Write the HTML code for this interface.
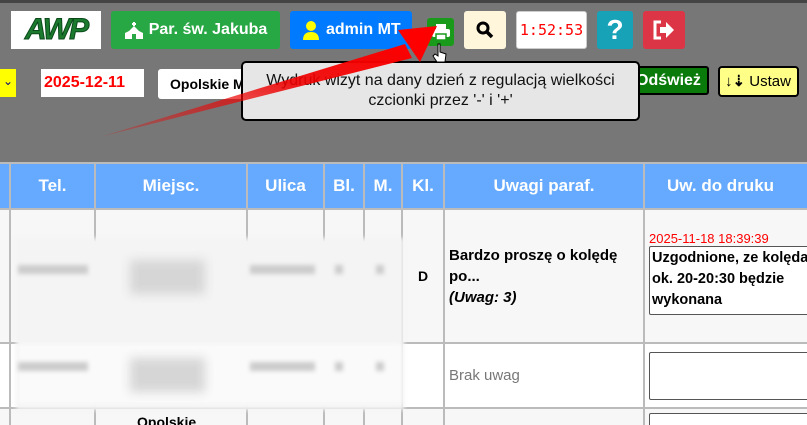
<!DOCTYPE html>
<html><head><meta charset="utf-8"><style>
*{box-sizing:border-box;margin:0;padding:0}
html,body{width:807px;height:425px;overflow:hidden}
body{background:#777;font-family:"Liberation Sans",Arial,sans-serif;position:relative}
.a{position:absolute}
.btn{position:absolute;border-radius:3px;color:#fff;font-weight:bold;font-size:16px;display:flex;align-items:center;justify-content:center;white-space:nowrap}
.tw{position:absolute;left:0;top:0;width:807px;height:425px;overflow:hidden}
table{position:absolute;left:-20px;top:162px;border-collapse:collapse;table-layout:fixed;width:863px}
td,th{border:2px solid #bbb;overflow:hidden}
th{background:#66aaff;color:#fff;font-size:17px;height:46px;font-weight:bold}
</style></head><body>
<div class="a" style="left:0;top:0;width:807px;height:3px;background:#444"></div>
<div class="a" style="left:11px;top:11px;width:90px;height:38px;background:#fff;color:#1b7a2e;font:italic bold 30px 'Liberation Sans';text-align:center;line-height:38px;letter-spacing:-2px;-webkit-text-stroke:1px #0a4a1a">AWP</div>
<div class="btn" style="left:111px;top:11px;width:169px;height:38px;background:#28a745"><svg width="20" height="18" style="margin-right:5px"><path d="M10 1 L10 5 M8 3 L12 3" stroke="#fff" stroke-width="2"/><path d="M10 5 L15 10 L15 18 L12 18 L12 13 L8 13 L8 18 L5 18 L5 10Z M1 12 L5 10 L5 18 L1 18Z M19 12 L15 10 L15 18 L19 18Z" fill="#fff"/></svg>Par. św. Jakuba</div>
<div class="btn" style="left:290px;top:11px;width:122px;height:38px;background:#007bff;justify-content:flex-start;padding-left:12px"><svg width="18" height="20" style="margin-right:6px"><circle cx="9" cy="6" r="5" fill="#ff0"/><path d="M1 20 Q1 12 9 12 Q17 12 17 20Z" fill="#ff0"/></svg>admin MT</div>
<div class="btn" style="left:427px;top:18px;width:27px;height:28px;background:#1a9a1a"><svg width="20" height="18"><rect x="5" y="1" width="10" height="5" fill="#fff"/><rect x="1" y="6" width="18" height="8" rx="2" fill="#fff"/><rect x="5" y="11" width="10" height="6" fill="#fff" stroke="#1a9a1a" stroke-width="1.5"/></svg></div>
<div class="btn" style="left:464px;top:11px;width:42px;height:38px;background:#fff6dc"><svg width="18" height="18"><circle cx="7" cy="7" r="5" stroke="#000" stroke-width="3" fill="none"/><path d="M11 11 L16 16" stroke="#000" stroke-width="3.5"/></svg></div>
<div class="btn" style="left:516px;top:11px;width:71px;height:38px;background:#fff;color:#f00;font:15px 'DejaVu Sans Mono',monospace;border:1px solid #ccc">1:52:53</div>
<div class="btn" style="left:597px;top:11px;width:36px;height:38px;background:#17a2b8;font-size:28px">?</div>
<div class="btn" style="left:643px;top:11px;width:42px;height:38px;background:#dc3545"><svg width="24" height="20"><path d="M9 2 H3 V18 H9" stroke="#fff" stroke-width="3" fill="none"/><path d="M8 7 H14 V2 L22 10 L14 18 V13 H8Z" fill="#fff"/></svg></div>
<div class="a" style="left:0;top:69px;width:16px;height:28px;background:#ff0;color:#000080;font-size:12px;text-align:center;line-height:24px">⌄</div>
<div class="a" style="left:41px;top:69px;width:103px;height:28px;background:#fff;color:#f00;font-weight:bold;font-size:16px;line-height:28px;padding-left:3px">2025-12-11</div>
<div class="a" style="left:158px;top:69px;width:200px;height:30px;background:#fff;border-radius:3px;font-weight:bold;font-size:14px;line-height:30px;padding-left:12px">Opolskie Miasteczko</div>
<div class="a" style="left:630px;top:66px;width:79px;height:29px;background:#0a7a0a;border:2px solid #000;border-radius:3px;color:#fff;font-weight:bold;font-size:16px;line-height:25px;padding-left:4px;white-space:nowrap">Odśwież</div>
<div class="a" style="left:718px;top:66px;width:81px;height:31px;background:#ff8;border:2px solid #000;border-radius:4px;color:#000;font-size:15px;line-height:27px;padding-left:5px;white-space:nowrap"><b>↓⇣</b> Ustaw</div>
<div class="a" style="left:241px;top:61px;width:399px;height:60px;background:#e6e6e6;border:2px solid #000;border-radius:5px;color:#111;font-size:16px;text-align:center;line-height:20px;padding-top:8px">Wydruk wizyt na dany dzień z regulacją wielkości<br>czcionki przez '-' i '+'</div>
<div class="tw">
<table>
<colgroup><col style="width:29px"><col style="width:85px"><col style="width:152px"><col style="width:77px"><col style="width:40px"><col style="width:38px"><col style="width:42px"><col style="width:200px"><col style="width:200px"></colgroup>
<tr><th></th><th>Tel.</th><th>Miejsc.</th><th>Ulica</th><th>Bl.</th><th>M.</th><th>Kl.</th><th>Uwagi paraf.</th><th style="text-align:left;padding-left:22px">Uw. do druku</th></tr>
<tr style="height:134px;background:#f7f7f7"><td></td><td></td><td></td><td></td><td></td><td></td><td style="text-align:center;font-weight:bold;font-size:14px">D</td><td style="font-size:15px;font-weight:bold;line-height:21px;padding-left:4px"><div style="width:180px">Bardzo proszę o kolędę po...<br><i>(Uwag: 3)</i></div></td><td style="padding:0 0 0 4px;vertical-align:top;padding-top:21px"><div style="color:#f00;font-size:13px">2025-11-18 18:39:39</div><div style="background:#fff;border:1px solid #555;border-radius:2px;font-size:14.5px;font-weight:bold;line-height:21px;padding:1px 2px;height:69px;width:170px;white-space:nowrap">Uzgodnione, ze kolęda<br>ok. 20-20:30 będzie<br>wykonana</div></td></tr>
<tr style="height:65px;background:#fff"><td></td><td></td><td></td><td></td><td></td><td></td><td></td><td style="color:#777;font-size:15px;padding-left:4px">Brak uwag</td><td style="padding-left:4px"><div style="border:1px solid #555;border-radius:2px;height:48px;width:200px"></div></td></tr>
<tr style="height:20px;background:#f7f7f7"><td></td><td></td><td></td><td></td><td></td><td></td><td></td><td></td><td style="padding-left:4px;vertical-align:top;padding-top:4px"><div style="border:1px solid #555;border-radius:2px;height:20px;width:200px;background:#fff"></div></td></tr>
</table>
</div>
<div class="a" style="left:16px;top:238px;width:388px;height:172px;background:#f4f4f4;filter:blur(2px)"></div>
<div class="a" style="left:18px;top:344px;width:384px;height:60px;background:#fafafa;filter:blur(2px)"></div>
<div class="a" style="left:18px;top:265px;width:70px;height:9px;background:#ccc;filter:blur(2px)"></div>
<div class="a" style="left:130px;top:260px;width:75px;height:34px;background:#d6d6d6;filter:blur(5px)"></div>
<div class="a" style="left:250px;top:265px;width:65px;height:9px;background:#ccc;filter:blur(2px)"></div>
<div class="a" style="left:335px;top:265px;width:8px;height:9px;background:#ccc;filter:blur(2px)"></div>
<div class="a" style="left:376px;top:265px;width:8px;height:9px;background:#ccc;filter:blur(2px)"></div>
<div class="a" style="left:18px;top:362px;width:70px;height:9px;background:#ccc;filter:blur(2px)"></div>
<div class="a" style="left:130px;top:358px;width:75px;height:34px;background:#d6d6d6;filter:blur(5px)"></div>
<div class="a" style="left:250px;top:362px;width:65px;height:9px;background:#ccc;filter:blur(2px)"></div>
<div class="a" style="left:335px;top:362px;width:8px;height:9px;background:#ccc;filter:blur(2px)"></div>
<div class="a" style="left:376px;top:362px;width:8px;height:9px;background:#ccc;filter:blur(2px)"></div>
<div class="a" style="left:137px;top:414px;font-weight:bold;font-size:14px">Opolskie</div>
<svg class="a" style="left:0;top:0" width="807" height="425"><defs><linearGradient id="g" x1="0" y1="1" x2="1" y2="0"><stop offset="0" stop-color="#e00" stop-opacity="0.2"/><stop offset="0.6" stop-color="#e00" stop-opacity="0.9"/><stop offset="1" stop-color="#f00"/></linearGradient></defs>
<polygon points="100,137 405,44 412,58" fill="url(#g)"/><polygon points="398,30 437,26 420,62" fill="#f00"/>
<path d="M438 44 v12 l-3 -2 l-2 2 l4 6 h8 l1 -8 l-6 -2 v-8 z" fill="#fff" stroke="#000"/></svg>
</body></html>
